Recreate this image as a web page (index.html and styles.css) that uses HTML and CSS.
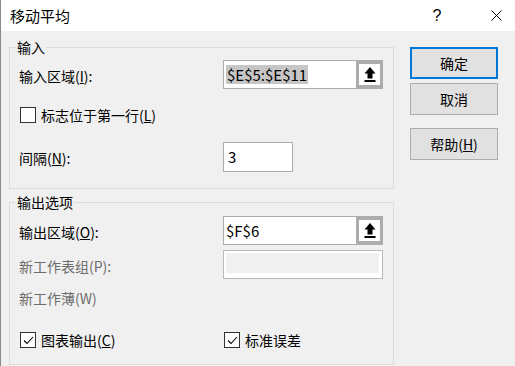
FILE: index.html
```html
<!DOCTYPE html>
<html lang="zh-CN">
  <head>
    <meta charset="UTF-8" />
    <meta name="viewport" content="width=device-width, initial-scale=1.0" />
    <title>移动平均</title>
    <link rel="stylesheet" href="styles.css">
  </head>
  <body>
    <div class="dialog">
      <div class="titlebar">
        <span class="title">移动平均</span>
        <span class="help-mark">?</span>
        <span class="close">
          <svg width="11" height="11" viewBox="0 0 11 11"><path d="M0.5 0.5 L10.5 10.5 M10.5 0.5 L0.5 10.5" stroke="#000" stroke-width="1" fill="none"/></svg>
        </span>
      </div>

      <div class="content">
        <div class="groups">
          <fieldset class="group group-in">
            <legend>输入</legend>

            <div class="row row-range">
              <span class="label">输入区域(<u>I</u>):</span>
              <div class="ref-box">
                <span class="ref-text"><span class="selected">$E$5:$E$11</span></span>
                <span class="ref-btn">
                  <svg width="12" height="16" viewBox="0 0 12 16"><path d="M6 0 L0.5 6.5 L3.5 6.5 L3.5 11.5 L8.5 11.5 L8.5 6.5 L11.5 6.5 Z M0.5 13 L11.5 13 L11.5 15 L0.5 15 Z" fill="#000"/></svg>
                </span>
              </div>
            </div>

            <div class="row row-check">
              <span class="check"></span>
              <span>标志位于第一行(<u>L</u>)</span>
            </div>

            <div class="row row-interval">
              <span class="label">间隔(<u>N</u>):</span>
              <div class="text-box short">3</div>
            </div>
          </fieldset>

          <fieldset class="group group-out">
            <legend>输出选项</legend>

            <div class="row row-range">
              <span class="label">输出区域(<u>O</u>):</span>
              <div class="ref-box">
                <span class="ref-text">$F$6</span>
                <span class="ref-btn">
                  <svg width="12" height="16" viewBox="0 0 12 16"><path d="M6 0 L0.5 6.5 L3.5 6.5 L3.5 11.5 L8.5 11.5 L8.5 6.5 L11.5 6.5 Z M0.5 13 L11.5 13 L11.5 15 L0.5 15 Z" fill="#000"/></svg>
                </span>
              </div>
            </div>

            <div class="row row-sheet">
              <span class="label disabled">新工作表组(P):</span>
              <div class="text-box disabled-box"><div class="disabled-fill"></div></div>
            </div>

            <div class="row row-book">
              <span class="label disabled">新工作薄(W)</span>
            </div>

            <div class="row row-options">
              <div class="option">
                <span class="check checked">
                  <svg width="13" height="13" viewBox="0 0 13 13"><path d="M2 6.5 L5 9.5 L11 3" stroke="#000" stroke-width="1.1" fill="none"/></svg>
                </span>
                <span>图表输出(<u>C</u>)</span>
              </div>
              <div class="option">
                <span class="check checked">
                  <svg width="13" height="13" viewBox="0 0 13 13"><path d="M2 6.5 L5 9.5 L11 3" stroke="#000" stroke-width="1.1" fill="none"/></svg>
                </span>
                <span>标准误差</span>
              </div>
            </div>
          </fieldset>
        </div>

        <div class="buttons">
          <div class="btn btn-default">确定</div>
          <div class="btn">取消</div>
          <div class="btn btn-help">帮助(<u>H</u>)</div>
        </div>
      </div>
    </div>
  </body>
</html>
```

FILE: styles.css
```css
* {
  box-sizing: border-box;
}

body {
  margin: 0;
  font-family: "Noto Sans CJK SC", "Noto Sans", sans-serif;
  font-size: 14px;
  color: #000;
  background: #f0f0f0;
  overflow: hidden;
}

.dialog {
  width: 515px;
  height: 366px;
  border-left: 1px solid #8a8a8a;
  background: #f0f0f0;
  overflow: hidden;
}

.titlebar {
  height: 31px;
  background: #fff;
  display: flex;
  align-items: center;
  padding-left: 9px;
}

.title {
  flex: 1;
  font-size: 15px;
  line-height: 20px;
}

.help-mark {
  width: 20px;
  text-align: center;
  font-family: "Liberation Sans", sans-serif;
  font-size: 16px;
  margin-right: 44px;
}

.close {
  display: flex;
  margin-right: 13px;
}

.content {
  display: flex;
  padding-left: 8px;
}

.groups {
  width: 385px;
}

/* group boxes */
.group {
  margin: 8px 0 0;
  padding: 0 9px;
  border: 1px solid #dcdcdc;
  min-width: 0;
}

.group-out {
  margin-top: 5px;
  padding-bottom: 11px;
}

.group-in {
  padding-bottom: 16px;
}

legend {
  padding: 0 1px;
  margin-left: -3px;
  line-height: 16px;
  font-size: 14px;
}

.row {
  display: flex;
  align-items: center;
  line-height: 18px;
}

.label {
  width: 204px;
  flex-shrink: 0;
  padding-top: 2px;
}

.disabled {
  color: #6d6d6d;
}

.group-in .row-range {
  margin-top: 5px;
  height: 29px;
}

.row-check {
  margin-top: 13px;
  height: 26px;
}

.row-interval {
  margin-top: 14px;
  height: 30px;
}

.group-out .row-range {
  margin-top: 6px;
  height: 29px;
}

.row-sheet {
  margin-top: 5px;
  height: 29px;
}

.row-book {
  margin-top: 5px;
  height: 26px;
}

.row-options {
  margin-top: 17px;
  height: 26px;
}

.option {
  width: 204px;
  flex-shrink: 0;
  display: flex;
  align-items: center;
}

/* inputs */
.ref-box {
  width: 160px;
  height: 29px;
  flex-shrink: 0;
  display: flex;
  border: 1px solid #acacac;
  background: #fff;
}

.ref-text {
  flex: 1;
  padding-left: 2px;
  font-size: 15px;
  display: flex;
  align-items: center;
}

.selected {
  background: #c6c6c6;
  padding: 0 1px;
  line-height: 19px;
}

.ref-btn {
  width: 26px;
  border: 3px solid #acacac;
  border-right-width: 2px;
  display: flex;
  align-items: center;
  justify-content: center;
  background: #fff;
}

.text-box {
  height: 30px;
  border: 1px solid #acacac;
  background: #fff;
  padding-left: 4px;
  font-size: 15px;
  display: flex;
  align-items: center;
}

.short {
  width: 70px;
}

.disabled-box {
  width: 160px;
  height: 29px;
  border-color: #b9b9b9;
  padding: 2px 3px 5px 2px;
  align-items: stretch;
}

.disabled-fill {
  flex: 1;
  background: #f0f0f0;
}

/* checkboxes */
.check {
  width: 16px;
  height: 16px;
  border: 1px solid #333;
  background: #fff;
  margin-left: 1px;
  margin-right: 5px;
  display: flex;
  align-items: center;
  justify-content: center;
}

/* buttons */
.buttons {
  width: 88px;
  margin-left: 16px;
  padding-top: 16px;
  display: flex;
  flex-direction: column;
}

.btn {
  height: 32px;
  background: #e1e1e1;
  border: 1px solid #adadad;
  display: flex;
  align-items: center;
  justify-content: center;
  margin-top: 4px;
}

.btn-default {
  border: 2px solid #0078d7;
  margin-top: 0;
}

.btn-help {
  margin-top: 13px;
}
```
